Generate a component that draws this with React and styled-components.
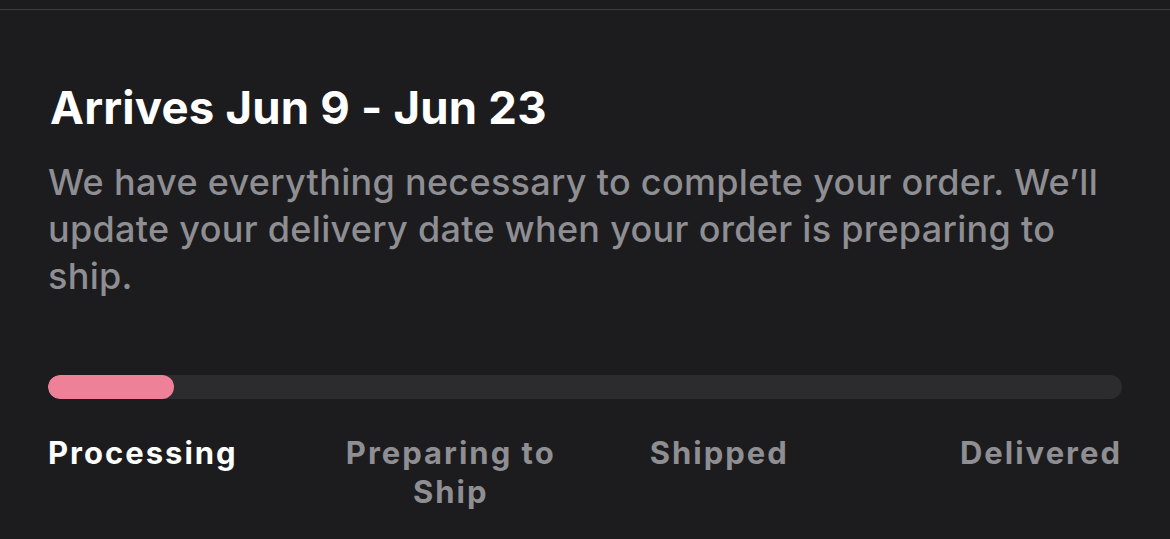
import React from 'react';
import styled, { createGlobalStyle } from 'styled-components';

const GlobalStyle = createGlobalStyle`
  html, body {
    margin: 0;
    padding: 0;
    background: #1c1c1e;
  }
  body {
    font-family: Inter, "Noto Sans", "Liberation Sans", sans-serif;
    -webkit-font-smoothing: antialiased;
  }
`;

const Page = styled.div`
  width: 1170px;
  height: 539px;
  overflow: hidden;
  background: #1c1c1e;
  padding-top: 9px;
  box-sizing: border-box;
`;

const Divider = styled.hr`
  margin: 0;
  border: 0;
  height: 1px;
  background: #3d3d40;
`;

const Section = styled.section`
  padding: 70px 48px 0;
`;

const Title = styled.h1`
  margin: 0 0 0 2px;
  color: #ffffff;
  font-size: 45.5px;
  font-weight: 700;
  line-height: 56px;
  letter-spacing: 0.2px;
`;

const Description = styled.p`
  margin: 23px 0 0;
  color: #8e8e93;
  font-size: 36px;
  font-weight: 500;
  line-height: 47px;
  letter-spacing: 0.3px;
`;

const Track = styled.div`
  margin-top: 75px;
  height: 24px;
  border-radius: 12px;
  background: #2c2c2e;
  overflow: hidden;
`;

const Fill = styled.div`
  height: 100%;
  border-radius: 12px;
  background: #ee8098;
`;

const Steps = styled.ol`
  list-style: none;
  margin: 34px 0 0;
  padding: 0;
  display: grid;
  grid-template-columns: repeat(4, 1fr);
`;

const Step = styled.li`
  font-size: 31px;
  font-weight: 700;
  line-height: 39px;
  letter-spacing: 2px;
  color: ${({ $active }) => ($active ? '#ffffff' : '#8e8e93')};
  text-align: ${({ $align }) => $align};
`;

const steps = ['Processing', 'Preparing to Ship', 'Shipped', 'Delivered'];

const alignFor = (i) => {
  if (i === 0) return 'left';
  if (i === steps.length - 1) return 'right';
  return 'center';
};

export default function App() {
  const progress = 0.1175;

  return (
    <Page>
      <GlobalStyle />
      <Divider />
      <Section>
        <Title>Arrives Jun 9 - Jun 23</Title>
        <Description>
          We have everything necessary to complete your order. We’ll update your
          delivery date when your order is preparing to ship.
        </Description>
        <Track>
          <Fill style={{ width: `${progress * 100}%` }} />
        </Track>
        <Steps>
          {steps.map((s, i) => (
            <Step key={s} $active={i === 0} $align={alignFor(i)}>
              {s}
            </Step>
          ))}
        </Steps>
      </Section>
    </Page>
  );
}
